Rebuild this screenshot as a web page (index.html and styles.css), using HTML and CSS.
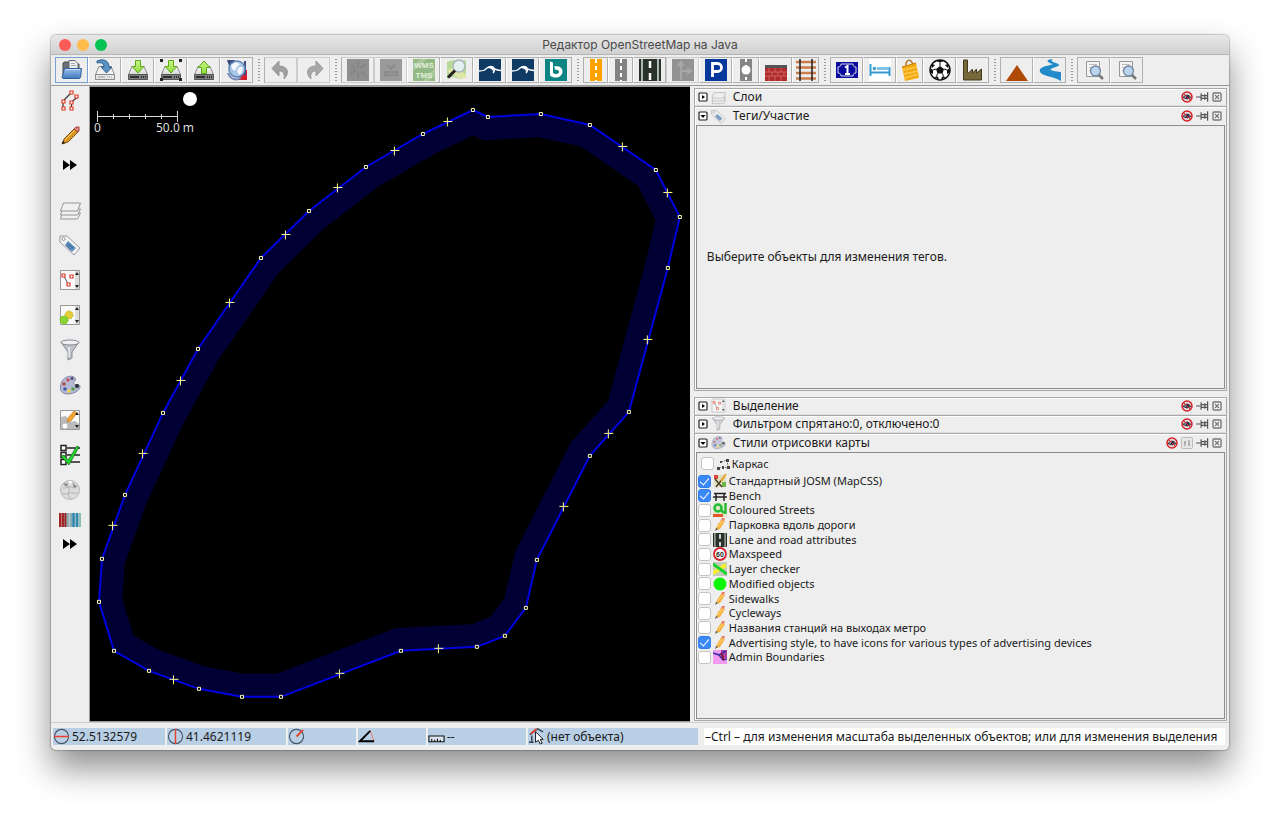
FILE: index.html
```html
<!DOCTYPE html>
<html lang="ru">
<head>
  <meta charset="UTF-8" />
  <meta name="viewport" content="width=device-width, initial-scale=1.0"/>
  <title>Редактор OpenStreetMap на Java</title>
  <link rel="stylesheet" href="styles.css">
</head>
<body>

  <svg class="sprite" aria-hidden="true">
    <defs>
      <linearGradient id="gGreen" x1="0" y1="0" x2="0" y2="1"><stop offset="0" stop-color="#c9f58a"/><stop offset="1" stop-color="#8fdc3c"/></linearGradient>
      <linearGradient id="gBlue" x1="0" y1="0" x2="0" y2="1"><stop offset="0" stop-color="#9cc0ea"/><stop offset="1" stop-color="#3f78bf"/></linearGradient>
      <linearGradient id="gDisk" x1="0" y1="0" x2="0" y2="1"><stop offset="0" stop-color="#fafafa"/><stop offset="1" stop-color="#c4c5c2"/></linearGradient>
    </defs>
    <symbol id="i-folder" viewBox="0 0 22 22">
      <path d="M2 18V4l1-1h5l1 2h9v12z" fill="#6b7078" stroke="#4a4f56"/>
      <path d="M8 1.500h6l3 3V12H8z" fill="#eee" stroke="#666"/><path d="M10 4.500h4M10 6.500h5" stroke="#aaa"/>
      <path d="M3.500 9.500h17l-1 9-1 1H2l-1-1z" fill="url(#gBlue)" stroke="#2d5f9f"/>
      <path d="M4 10.500h15" stroke="#c6dcf5"/>
    </symbol>
    <symbol id="i-disk" viewBox="0 0 22 22">
      <path d="M5 7.500h12l3.500 8v5h-19v-5z" fill="url(#gDisk)" stroke="#8a8a8a"/>
      <path d="M1.500 15.500h19v5h-19z" fill="#7d807e" stroke="#555"/>
      <path d="M3 18h9M14 18h1M16 18h1M18 18h1" stroke="#2e2e2e" stroke-width="2"/>
    </symbol>
    <symbol id="i-save" viewBox="0 0 22 22">
      <path d="M5 7.500h12l3.500 8v5h-19v-5z" fill="#f2f2f2" stroke="#8b8b8b"/><path d="M1.500 15.500h19v5h-19z" fill="#e6e7e9" stroke="#8b8b8b"/>
      <path d="M4 18h7M13 18h1M15 18h1M17 18h1" stroke="#999"/>
      <path d="M3 2c7-3 12 0 12 6h3l-5.500 6L7 8h3C10 5 8 3 3 4z" fill="#5a92c4" stroke="#2c5f8f"/>
    </symbol>
    <symbol id="i-down" viewBox="0 0 22 22">
      <use href="#i-disk"/><path d="M8.500 1.500h5v6h3.500l-6 6.500-6-6.500h3.500z" fill="url(#gGreen)" stroke="#5aa816"/>
    </symbol>
    <symbol id="i-downsel" viewBox="0 0 22 22">
      <use href="#i-down"/><path d="M0 0h3v3H0zM19 0h3v3h-3zM0 19h3v3H0zM19 19h3v3h-3z" fill="#222"/>
    </symbol>
    <symbol id="i-up" viewBox="0 0 22 22">
      <use href="#i-disk"/><path d="M8.500 14.500h5v-6H17l-6-6.500-6 6.500h3.500z" fill="url(#gGreen)" stroke="#5aa816"/>
    </symbol>
    <symbol id="i-globe" viewBox="0 0 22 22">
      <path d="M1 1h8L4 10z" fill="#3b4d7c"/><path d="M21 21h-9l6-10h3z" fill="#d81b2c"/>
      <path d="M19 2v14" stroke="#3b4d7c" stroke-width="2"/>
      <circle cx="11" cy="10" r="8" fill="#a8c6e8" stroke="#5d82b5" stroke-width="1.500"/>
      <path d="M5 6l5-3 4 2-3 3-2 4-3-2zM13 8l4 0-1 6-3 2-2-4z" fill="#f3f7fb"/>
      <path d="M2 14c2 6 8 8 13 5" fill="none" stroke="#6d86b5" stroke-width="2"/>
    </symbol>
    <symbol id="i-undo" viewBox="0 0 22 22">
      <path d="M9 2v5c9 0 11 7 5 13 1-6-1-8-5-8v5L2 9.500z" fill="#a0a0a0" stroke="#979797"/>
    </symbol>
    <symbol id="i-redo" viewBox="0 0 22 22">
      <path d="M13 2v5C4 7 2 14 8 20c-1-6 1-8 5-8v5l7-7.500z" fill="#a8a8a8" stroke="#999"/>
    </symbol>
    <symbol id="i-gray1" viewBox="0 0 22 22">
      <path d="M0 0h22v22H0z" fill="#8f8f8f"/><path d="M11 3v6M11 13v6M3 16l6-5M13 9l6-4M4 6l4 3M14 13l5 4" stroke="#858585" stroke-width="2"/>
    </symbol>
    <symbol id="i-gray2" viewBox="0 0 22 22">
      <path d="M0 0h22v22H0z" fill="#9a9a9a"/><path d="M8 6l3 4 4-5M5 13h12v3H5z" stroke="#8b8b8b" stroke-width="2" fill="none"/>
    </symbol>
    <symbol id="i-zoommap" viewBox="0 0 22 22">
      <path d="M1 3l6-2 8 1 5-1v17l-6 2-7-2-6 2z" fill="#b7d99a"/><path d="M1 12l8-5 11 9v3l-6 1z" fill="#e0e6a8"/>
      <circle cx="13" cy="7" r="6" fill="#e3eff0" stroke="#a9b6b8" stroke-width="1.500"/><path d="M9 11.500l-7 7" stroke="#222" stroke-width="3"/>
    </symbol>
    <symbol id="i-wave" viewBox="0 0 22 22">
      <path d="M0 0h22v22H0z" fill="#0f3a63"/><path d="M0 12c5 0 6-1 8-3s6-2 7 0 0 4-1 5M9 8.500c5-1 6 3 13 3" fill="none" stroke="#fff" stroke-width="1.300"/><path d="M8 9c3-2 6-1 7 1l-1 3c0-3-3-4-6-4z" fill="#fff"/>
    </symbol>
    <symbol id="i-bing" viewBox="0 0 22 22">
      <path d="M0 0h22v22H0z" fill="#0c8484"/><path d="M5 2.500l3 1v10.500c2 2 6 1 6-1s-2-2.500-3.500-2L9 7.500c5-1 8.500 1 8.500 5 0 6-8 8-12.500 4z" fill="#fff"/>
    </symbol>
    <symbol id="i-roado" viewBox="0 0 22 22"><path d="M5 0h12v22H5z" fill="#ffa200"/><path d="M11 0v22" stroke="#fff" stroke-width="2" stroke-dasharray="4 3"/></symbol>
    <symbol id="i-roadg" viewBox="0 0 22 22"><path d="M5 0h12v22H5z" fill="#838383"/><path d="M11 0v22" stroke="#fff" stroke-width="2" stroke-dasharray="4 3"/></symbol>
    <symbol id="i-highway" viewBox="0 0 22 22">
      <path d="M0 0h22v22H0z" fill="#27332a"/><path d="M3 0v22M19 0v22" stroke="#dfe3df" stroke-width="1.500"/><path d="M11 2v7M11 14v7" stroke="#fff" stroke-width="2.500"/>
    </symbol>
    <symbol id="i-turn" viewBox="0 0 22 22"><path d="M0 0h22v22H0z" fill="#929292"/><path d="M9 21V4M9 12h8M6 7l3-4 3 4M15 9l4 3-4 3" stroke="#a8a8a8" stroke-width="2" fill="none"/></symbol>
    <symbol id="i-parking" viewBox="0 0 22 22"><path d="M0 0h22v22H0z" fill="#06379b"/><path d="M7.500 18V4.500h5a4 4 0 0 1 0 8h-5" fill="none" stroke="#fff" stroke-width="2.800"/></symbol>
    <symbol id="i-node" viewBox="0 0 22 22"><path d="M5 0h12v22H5z" fill="#858585"/><path d="M11 0v22" stroke="#fff" stroke-width="2" stroke-dasharray="3 3"/><circle cx="11" cy="11" r="4.500" fill="#fff"/></symbol>
    <symbol id="i-wall" viewBox="0 0 22 22">
      <path d="M0 6h22v16H0z" fill="#b02c2c"/><path d="M0 6h22v3H0z" fill="#555"/><path d="M0 13h22M0 17h22M4 9v4M10 9v4M16 9v4M7 13v4M13 13v4M19 13v4M4 17v5M10 17v5M16 17v5" stroke="#df8585" stroke-width=".6"/>
    </symbol>
    <symbol id="i-rail" viewBox="0 0 22 22"><path d="M1 3h20M1 8.500h20M1 14h20M1 19.500h20" stroke="#c97c4c" stroke-width="2.500"/><path d="M5 0v22M17 0v22" stroke="#1c1c1c" stroke-width="1.500"/></symbol>
    <symbol id="i-one" viewBox="0 0 22 22">
      <path d="M0 3h22v16H0z" fill="#0b0b9d"/><path d="M5 5h12c0 2 1 3 3 3v6c-2 0-3 1-3 3H5c0-2-1-3-3-3V8c2 0 3-1 3-3z" fill="none" stroke="#dde"/><path d="M9 8.500l2.500-1.500v8M9 15h5" fill="none" stroke="#fff" stroke-width="2"/>
    </symbol>
    <symbol id="i-bed" viewBox="0 0 22 22"><path d="M0 0h22v22H0z" fill="#fff"/><path d="M1.500 5v12M2 13.500h18M20.500 8v9" stroke="#359bd0" stroke-width="2"/><circle cx="5.500" cy="9.500" r="1.700" fill="#359bd0"/><path d="M8 8h12v3H8z" fill="#7fc3e6"/></symbol>
    <symbol id="i-bag" viewBox="0 0 22 22"><path d="M7 8c-1-7 5-10 7-2" fill="none" stroke="#b2752c" stroke-width="1.500"/><path d="M3 8l14-4 3 15-14 3z" fill="#f4a913"/><path d="M4 11l14-3M5 15l14-3M5 19l15-4" stroke="#fac84d" stroke-width="1.500"/><path d="M3 8l14-4" stroke="#c98100" fill="none"/></symbol>
    <symbol id="i-ball" viewBox="0 0 22 22">
      <circle cx="11" cy="11" r="10" fill="#fff" stroke="#111" stroke-width="1.500"/><path d="M11 7l4 3-1.500 4.500h-5L7 10zM7 2l4 1.500L15 2l-2-1H9zM1 9l3 2v4l-2-1zM21 9l-3 2v4l2-1zM5 18l4-.5 1 3.500zM17 18l-4-.5-1 3.500zM3 5l3 1-3 3zM19 5l-3 1 3 3z" fill="#111"/><path d="M11 3.500V7M15 10l3 1M13.500 14.500l1 3M8.500 14.500l-1 3M7 10l-3 1" stroke="#111"/>
    </symbol>
    <symbol id="i-factory" viewBox="0 0 22 22"><path d="M1.500 1h4v12l1 1 4-4v4l4-4v4l5-4v11h-18z" fill="#77683c" stroke="#42391c"/></symbol>
    <symbol id="i-peak" viewBox="0 0 22 22"><path d="M11 6l11 16H0z" fill="#ae4a05"/></symbol>
    <symbol id="i-river" viewBox="0 0 22 22"><path d="M14 0C4 1 10 4 14 5 10 7-1 7 1 13c2 4 12 4 21 9v-9c-8-1-14-2-8-4 7-2 8-3 3-5-4-1-6-3-3-4z" fill="#238bc9"/></symbol>
    <symbol id="i-search" viewBox="0 0 22 22">
      <path d="M3.500 2.500h13v15h-13z" fill="#f4f4f2" stroke="#999"/><path d="M6 5.500h8M6 8.500h3M6 11.500h2" stroke="#bbb"/><circle cx="12.500" cy="12" r="5" fill="#b8d4ee" stroke="#7487a0" stroke-width="1.300"/><path d="M16 16l4 4" stroke="#777" stroke-width="2.500"/>
    </symbol>

    <symbol id="i-select" viewBox="0 0 22 22"><path d="M4 19v-8l8-8M12.500 19v-7l6-5" fill="none" stroke="#333" stroke-width="1.200"/><path d="M3 17h3v3H3zM3 10h3v3H3zM11 1h3v3h-3zM11 17h3v3h-3zM11 11h3v3h-3zM16 5h3v3h-3z" fill="#fff" stroke="#e03a28" stroke-width="1.200"/></symbol>
    <symbol id="i-draw" viewBox="0 0 22 22"><path d="M3 19l2-5L15 4l4 3-10 10z" fill="#dd9523" stroke="#80501a"/><path d="M15 4l2-2h3v4l-1 1z" fill="#e58a7e" stroke="#a64138"/><path d="M3 19l1-3 2 2z" fill="#111"/><path d="M6 15L16 5" stroke="#f6ca62"/></symbol>
    <symbol id="i-more" viewBox="0 0 16 10"><path d="M1 0l7 5-7 5zM8 0l7 5-7 5z" fill="#000"/></symbol>
    <symbol id="i-layers" viewBox="0 0 22 22"><g fill="#f0f0f0" stroke="#969696"><path d="M1.500 20l2-6h18l-3 6z"/><path d="M1.500 16l2-6h18l-3 6z"/><path d="M1.500 12l3-8h17l-3 8z"/></g></symbol>
    <symbol id="i-tag" viewBox="0 0 22 22"><path d="M1 2h7l13 12-6 7L1 8z" fill="#f3f3f3" stroke="#969ba3"/><circle cx="4.500" cy="5" r="1.500" fill="#fff" stroke="#999"/><path d="M9 7l8 7-4 4-7-7z" fill="#5e8ebd"/><path d="M9 10l5 4M7 11l5 5" stroke="#315e8d"/></symbol>
    <symbol id="i-selection" viewBox="0 0 22 22"><path d="M1.500 1.500h19v19h-19z" fill="#fafafa" stroke="#999"/><path d="M16 2h4v18h-4z" fill="#ddd"/><path d="M16 6l2-3 2 3zM16 16l2 3 2-3z" fill="#222"/><path d="M5 7l4 8M11 8h2" fill="none" stroke="#555"/><path d="M3 5h3v3H3zM8 14h3v3H8zM11 6h3v3h-3z" fill="#fff" stroke="#df3b2d" stroke-width="1.200"/></symbol>
    <symbol id="i-relation" viewBox="0 0 22 22"><path d="M1.500 1.500h19v19h-19z" fill="#fafafa" stroke="#999"/><path d="M16 2h4v18h-4z" fill="#ddd"/><path d="M16 6l2-3 2 3zM16 16l2 3 2-3z" fill="#222"/><circle cx="10" cy="11" r="4" fill="#e3ce36" stroke="#c9b23a" stroke-dasharray="2 1"/><circle cx="5" cy="16" r="4" fill="#8ad42f" stroke="#76bd26" stroke-dasharray="2 1"/></symbol>
    <symbol id="i-filter" viewBox="0 0 22 22"><path d="M2 3l7 10v8l4-2v-6l7-10z" fill="#c1c4cb" stroke="#858891"/><ellipse cx="11" cy="3.500" rx="9" ry="2.500" fill="#f0f0f2" stroke="#858891"/><path d="M10 8v10" stroke="#fff"/></symbol>
    <symbol id="i-palette" viewBox="0 0 22 22"><path d="M2 10C3 3 13 0 16 4c2 3-3 4-1 6s6-1 6 3c-1 5-8 7-13 7S0 16 2 10z" fill="#b4b9d4" stroke="#8488a6"/><circle cx="9" cy="6" r="1.700" fill="#d14b57"/><circle cx="13" cy="4.500" r="1.500" fill="#52407b"/><circle cx="5" cy="10" r="1.700" fill="#b5463e"/><circle cx="6" cy="15" r="1.800" fill="#3f5bb0"/><circle cx="10" cy="17" r="1.800" fill="#e7d84a"/><circle cx="14" cy="15" r="1.800" fill="#5c9f4a"/><circle cx="18" cy="12" r="2" fill="#282d37"/></symbol>
    <symbol id="i-changeset" viewBox="0 0 22 22"><path d="M1.500 1.500h19v19h-19z" fill="#fafafa" stroke="#999"/><path d="M2 8l5-1 4 6 5-1 4 3v5H2z" fill="#bbb"/><circle cx="6" cy="17" r="3" fill="#fff" stroke="#bbb"/><path d="M8 13l1-4 6-7 3 2-6 8z" fill="#f0a631" stroke="#b57521" stroke-width=".6"/><path d="M16 6l2-3 2 3zM16 16l2 3 2-3z" fill="#222"/></symbol>
    <symbol id="i-valid" viewBox="0 0 22 22"><path d="M2 1.500h5v5H2zM2 8.500h5v5H2zM2 15.500h5v5H2zM8 4h13M8 11h13M8 18h13" fill="#fff" stroke="#222" stroke-width="1.500"/><path d="M2 12l3-1 4 5L18 2l2 1L10 21z" fill="#25d52c" stroke="#116615" stroke-width=".7"/></symbol>
    <symbol id="i-wiki" viewBox="0 0 22 22"><circle cx="11" cy="11" r="9.500" fill="#dcdcdc" stroke="#b8b8b8"/><path d="M4 9c3 1 4-2 7-1M8 3c0 4 3 5 2 9s-1 5 2 8M11 8c4 1 5-2 8-1M10 14c3-1 5 1 9 0M3 15c3-1 4 1 7-1M14 3c-1 3 2 4 1 7" fill="none" stroke="#aaa" stroke-width=".8"/><path d="M4 4l5 1-2 3zM14 4l4 4-3 1z" fill="#888"/><path d="M9 2l4 0-1 3z" fill="#fff"/></symbol>
    <symbol id="i-stripes" viewBox="0 0 22 14"><path d="M0 0h22v14H0z" fill="#b9cccb"/><path d="M1 0v14M4 0v14" stroke="#a82428" stroke-width="2.500"/><path d="M6.500 0v14" stroke="#8e2226" stroke-width="2"/><path d="M9 0v14M12 0v14" stroke="#7ea3ac" stroke-width="1.500"/><path d="M14.500 0v14M18 0v14" stroke="#2d87ae" stroke-width="2.500"/><path d="M21 0v14" stroke="#5bb29b"/></symbol>

    <symbol id="i-eye" viewBox="0 0 12 12"><circle cx="6" cy="6" r="5" fill="#e9dde4" stroke="#d52028" stroke-width="1.500"/><path d="M2 6.500q4-5 8 0-4 3-8 0z" fill="#8c8fb8" stroke="#333"/><circle cx="6.500" cy="6" r="1.500" fill="#223"/><path d="M2.500 2.500l7 7" stroke="#d52028"/></symbol>
    <symbol id="i-pin" viewBox="0 0 14 10"><path d="M0 5h5M5.500 1v8M12.500 0v10M6 3.500h6M6 6.500h6M9.500 2v6" fill="none" stroke="#555" stroke-width="1.300"/></symbol>
    <symbol id="i-close" viewBox="0 0 10 10"><rect x="1" y="1" width="8" height="8" rx="1" fill="#f5f5f5" stroke="#777" stroke-width="1.400"/><path d="M3 3l4 4M7 3l-4 4" stroke="#777" stroke-width="1.200"/></symbol>
    <symbol id="i-prefs" viewBox="0 0 12 12"><rect x=".5" y=".5" width="11" height="11" rx="1" fill="#e7e7e7" stroke="#bbb"/><path d="M4 5v4M8 3v5M3 5h2M7 8h2" stroke="#888"/></symbol>
    <symbol id="i-plus" viewBox="0 0 10 10"><rect x="1" y="1" width="8" height="8" rx="1" fill="#fff" stroke="#222" stroke-width="1.200"/><path d="M4 3l3 2-3 2z" fill="#000"/></symbol>
    <symbol id="i-minus" viewBox="0 0 10 10"><rect x="1" y="1" width="8" height="8" rx="1" fill="#fff" stroke="#222" stroke-width="1.200"/><path d="M2.500 4h5L5 7z" fill="#000"/></symbol>

    <symbol id="s-wire" viewBox="0 0 14 14"><path d="M3 11l4-1 5 1M5 5l6-2 1 7" fill="none" stroke="#777" stroke-dasharray="2 1"/><path d="M1 10h3v3H1zM6 9h2v3H6zM11 9h3v3h-3zM10 2h3v3h-3zM4 4h2v2H4z" fill="#444"/></symbol>
    <symbol id="s-josm" viewBox="0 0 14 14"><path d="M1 1h12v12H1z" fill="#dfe0bd"/><path d="M1 1h4v4H1z" fill="#d8473c"/><path d="M9 8h4v5H9z" fill="#6bb54b"/><path d="M2 5l7 8M11 3L3 13" stroke="#514127" stroke-width="1.500"/><path d="M13 0L8 7" stroke="#f0a533" stroke-width="2"/></symbol>
    <symbol id="s-bench" viewBox="0 0 14 14"><path d="M1 4.500h12M0 8h14M3 4v8M11 4v8" stroke="#222" stroke-width="1.500"/></symbol>
    <symbol id="s-colour" viewBox="0 0 14 14"><path d="M0 0h14v14H0z" fill="#dfe9c5"/><circle cx="5" cy="5" r="3.500" fill="none" stroke="#20bd36" stroke-width="2.500"/><path d="M12.500 0v11M8 7l3 3" stroke="#2cba36" stroke-width="2.500"/><path d="M0 12.500h10" stroke="#e4562c" stroke-width="3"/></symbol>
    <symbol id="s-pencil" viewBox="0 0 14 14"><path d="M3 12l1-4 4-6 4 1-5 8z" fill="#f6b03d"/><path d="M8 2l1-2h3l-1 3z" fill="#e77f6f"/><path d="M5 9l5-6" stroke="#ffdc78"/><path d="M2 13l1-3 2 1z" fill="#555"/></symbol>
    <symbol id="s-check" viewBox="0 0 14 14"><path d="M0 0h14v14H0z" fill="#c3cbb9"/><path d="M0 11L13 3" stroke="#f6ef2f" stroke-width="4"/><path d="M0 2l14 10" stroke="#18d32d" stroke-width="3"/></symbol>
    <symbol id="s-mod" viewBox="0 0 14 14"><circle cx="7" cy="7" r="6.500" fill="#0bf50b"/></symbol>
    <symbol id="s-admin" viewBox="0 0 14 14"><path d="M0 0h14v14H0z" fill="#f09af0"/><path d="M8 0h6v9L8 6z" fill="#b13d9e"/><path d="M0 3l6 2 4 5 4-1M6 5l7-4" fill="none" stroke="#372cae" stroke-width="1.500"/><path d="M8 3l3 7" stroke="#8d153d" stroke-width="2"/></symbol>
  </svg>

  <div class="window">
    <header class="titlebar">
      <div class="lights">
        <button class="light red" aria-label="Закрыть"></button>
        <button class="light yellow" aria-label="Свернуть"></button>
        <button class="light green" aria-label="Развернуть"></button>
      </div>
      <h1>Редактор OpenStreetMap на Java</h1>
    </header>

    <nav class="toolbar">
      <button class="tool active" aria-label="Открыть"><svg><use href="#i-folder"/></svg></button>
      <button class="tool" aria-label="Сохранить"><svg><use href="#i-save"/></svg></button>
      <button class="tool" aria-label="Загрузить"><svg><use href="#i-down"/></svg></button>
      <button class="tool" aria-label="Загрузить область"><svg><use href="#i-downsel"/></svg></button>
      <button class="tool" aria-label="Отправить"><svg><use href="#i-up"/></svg></button>
      <button class="tool" aria-label="Обновить"><svg><use href="#i-globe"/></svg></button>
      <span class="sep"></span>
      <button class="tool" aria-label="Отменить" disabled><svg><use href="#i-undo"/></svg></button>
      <button class="tool" aria-label="Повторить" disabled><svg><use href="#i-redo"/></svg></button>
      <span class="sep"></span>
      <button class="tool" aria-label="Разбить" disabled><svg><use href="#i-gray1"/></svg></button>
      <button class="tool" aria-label="Объединить" disabled><svg><use href="#i-gray2"/></svg></button>
      <button class="tool" aria-label="WMS TMS"><svg viewBox="0 0 22 22"><path d="M0 0h22v22H0z" fill="#93b985"/><path d="M0 6l8-6h6L0 12zM10 22l12-13v7l-6 6z" fill="#a9c99a"/><text x="11" y="9" class="tile-text">WMS</text><text x="11" y="19" class="tile-text">TMS</text></svg></button>
      <button class="tool" aria-label="Слой карты"><svg><use href="#i-zoommap"/></svg></button>
      <button class="tool" aria-label="Снимки 1"><svg><use href="#i-wave"/></svg></button>
      <button class="tool" aria-label="Снимки 2"><svg><use href="#i-wave"/></svg></button>
      <button class="tool" aria-label="Bing"><svg><use href="#i-bing"/></svg></button>
      <span class="sep"></span>
      <button class="tool narrow" aria-label="Дорога"><svg><use href="#i-roado"/></svg></button>
      <button class="tool narrow" aria-label="Улица"><svg><use href="#i-roadg"/></svg></button>
      <button class="tool" aria-label="Полосы"><svg><use href="#i-highway"/></svg></button>
      <button class="tool" aria-label="Поворот" disabled><svg><use href="#i-turn"/></svg></button>
      <button class="tool" aria-label="Парковка"><svg><use href="#i-parking"/></svg></button>
      <button class="tool mid" aria-label="Узел"><svg><use href="#i-node"/></svg></button>
      <button class="tool" aria-label="Стена"><svg><use href="#i-wall"/></svg></button>
      <button class="tool mid" aria-label="Железная дорога"><svg><use href="#i-rail"/></svg></button>
      <span class="sep"></span>
      <button class="tool" aria-label="Адрес"><svg><use href="#i-one"/></svg></button>
      <button class="tool" aria-label="Гостиница"><svg><use href="#i-bed"/></svg></button>
      <button class="tool mid" aria-label="Магазин"><svg><use href="#i-bag"/></svg></button>
      <button class="tool" aria-label="Спорт"><svg><use href="#i-ball"/></svg></button>
      <button class="tool" aria-label="Завод"><svg><use href="#i-factory"/></svg></button>
      <span class="sep"></span>
      <button class="tool" aria-label="Вершина"><svg><use href="#i-peak"/></svg></button>
      <button class="tool" aria-label="Река"><svg><use href="#i-river"/></svg></button>
      <span class="sep"></span>
      <button class="tool" aria-label="Поиск"><svg><use href="#i-search"/></svg></button>
      <button class="tool" aria-label="Поиск шаблонов"><svg><use href="#i-search"/></svg></button>
    </nav>

    <main class="workspace">
      <aside class="modes">
        <div class="mode-group">
          <button aria-label="Выделить"><svg><use href="#i-select"/></svg></button>
          <button aria-label="Рисовать"><svg><use href="#i-draw"/></svg></button>
          <button class="more" aria-label="Ещё режимы"><svg><use href="#i-more"/></svg></button>
        </div>
        <div class="mode-group">
          <button aria-label="Слои"><svg><use href="#i-layers"/></svg></button>
          <button aria-label="Теги"><svg><use href="#i-tag"/></svg></button>
          <button aria-label="Выделение"><svg><use href="#i-selection"/></svg></button>
          <button aria-label="Отношения"><svg><use href="#i-relation"/></svg></button>
          <button aria-label="Фильтр"><svg><use href="#i-filter"/></svg></button>
          <button aria-label="Стили"><svg><use href="#i-palette"/></svg></button>
          <button aria-label="Пакеты правок"><svg><use href="#i-changeset"/></svg></button>
          <button aria-label="Проверка"><svg><use href="#i-valid"/></svg></button>
          <button aria-label="Википедия"><svg><use href="#i-wiki"/></svg></button>
          <button class="strip" aria-label="Цвета"><svg><use href="#i-stripes"/></svg></button>
          <button class="more" aria-label="Ещё панели"><svg><use href="#i-more"/></svg></button>
        </div>
      </aside>

      <section class="map">
        <svg viewBox="90 87 600 634" preserveAspectRatio="xMinYMin meet">
          <defs>
            <path id="way" d="M473 110L488 117L541 114L590 125L656 170L680 217L668 268L629 412L590 456L537 560L526 608L505 636L477 647L401 651L281 697L242 697L199 689L149 671L114 651L99 602L102 559L125 495L163 413L198 349L261 258L309 211L366 167L423 134z"/>
            <clipPath id="inside"><use href="#way"/></clipPath>
            <path id="x" d="M-4 0h9M0-4v9" stroke="#ff8" fill="none"/>
            <path id="n" d="M-1-1h3v3h-3z" stroke="#ffb" fill="#000"/>
          </defs>
          <use href="#way" class="band" clip-path="url(#inside)"/>
          <use href="#way" class="line"/>
          <g class="nodes" id="nodes"></g>
          <circle cx="190" cy="99" r="7" fill="#fff"/>
          <path d="M97.500 111v11M97.500 116.500h80M177.500 111v11M113.500 114v5M129.500 114v5M145.500 114v5M161.500 114v5" stroke="#ddd" fill="none"/>
          <text x="94" y="132" class="scale-text">0</text>
          <text x="156" y="132" class="scale-text">50.0 m</text>
        </svg>
      </section>

      <div class="dialogs">
        <div class="stack top">
          <section class="panel">
            <header><button aria-label="Развернуть"><svg class="fold"><use href="#i-plus"/></svg></button><svg class="badge"><use href="#i-layers"/></svg><h2>Слои</h2>
              <span class="controls"><button aria-label="Скрыть"><svg class="eye"><use href="#i-eye"/></svg></button><button aria-label="Закрепить"><svg class="pin"><use href="#i-pin"/></svg></button><button aria-label="Закрыть"><svg class="close"><use href="#i-close"/></svg></button></span></header>
          </section>
          <section class="panel open">
            <header><button aria-label="Свернуть"><svg class="fold"><use href="#i-minus"/></svg></button><svg class="badge"><use href="#i-tag"/></svg><h2>Теги/Участие</h2>
              <span class="controls"><button aria-label="Скрыть"><svg class="eye"><use href="#i-eye"/></svg></button><button aria-label="Закрепить"><svg class="pin"><use href="#i-pin"/></svg></button><button aria-label="Закрыть"><svg class="close"><use href="#i-close"/></svg></button></span></header>
            <div class="content hint"><p>Выберите объекты для изменения тегов.</p></div>
          </section>
        </div>

        <div class="stack bottom">
          <section class="panel">
            <header><button aria-label="Развернуть"><svg class="fold"><use href="#i-plus"/></svg></button><svg class="badge"><use href="#i-selection"/></svg><h2>Выделение</h2>
              <span class="controls"><button aria-label="Скрыть"><svg class="eye"><use href="#i-eye"/></svg></button><button aria-label="Закрепить"><svg class="pin"><use href="#i-pin"/></svg></button><button aria-label="Закрыть"><svg class="close"><use href="#i-close"/></svg></button></span></header>
          </section>
          <section class="panel">
            <header><button aria-label="Развернуть"><svg class="fold"><use href="#i-plus"/></svg></button><svg class="badge"><use href="#i-filter"/></svg><h2>Фильтром спрятано:0, отключено:0</h2>
              <span class="controls"><button aria-label="Скрыть"><svg class="eye"><use href="#i-eye"/></svg></button><button aria-label="Закрепить"><svg class="pin"><use href="#i-pin"/></svg></button><button aria-label="Закрыть"><svg class="close"><use href="#i-close"/></svg></button></span></header>
          </section>
          <section class="panel open">
            <header><button aria-label="Свернуть"><svg class="fold"><use href="#i-minus"/></svg></button><svg class="badge"><use href="#i-palette"/></svg><h2>Стили отрисовки карты</h2>
              <span class="controls"><button aria-label="Скрыть"><svg class="eye"><use href="#i-eye"/></svg></button><button aria-label="Настройки"><svg class="eye"><use href="#i-prefs"/></svg></button><button aria-label="Закрепить"><svg class="pin"><use href="#i-pin"/></svg></button><button aria-label="Закрыть"><svg class="close"><use href="#i-close"/></svg></button></span></header>
            <div class="content">
              <label class="style-row wireframe"><input type="checkbox"><svg><use href="#s-wire"/></svg>Каркас</label>
              <div class="styles">
                <label class="style-row"><input type="checkbox" checked><svg><use href="#s-josm"/></svg>Стандартный JOSM (MapCSS)</label>
                <label class="style-row"><input type="checkbox" checked><svg><use href="#s-bench"/></svg>Bench</label>
                <label class="style-row"><input type="checkbox"><svg><use href="#s-colour"/></svg>Coloured Streets</label>
                <label class="style-row"><input type="checkbox"><svg><use href="#s-pencil"/></svg>Парковка вдоль дороги</label>
                <label class="style-row"><input type="checkbox"><svg><use href="#i-highway"/></svg>Lane and road attributes</label>
                <label class="style-row"><input type="checkbox"><svg viewBox="0 0 14 14"><circle cx="7" cy="7" r="6" fill="#fff" stroke="#d3222c" stroke-width="1.800"/><text x="7" y="9.500" class="speed-text">60</text></svg>Maxspeed</label>
                <label class="style-row"><input type="checkbox"><svg><use href="#s-check"/></svg>Layer checker</label>
                <label class="style-row"><input type="checkbox"><svg><use href="#s-mod"/></svg>Modified objects</label>
                <label class="style-row"><input type="checkbox"><svg><use href="#s-pencil"/></svg>Sidewalks</label>
                <label class="style-row"><input type="checkbox"><svg><use href="#s-pencil"/></svg>Cycleways</label>
                <label class="style-row"><input type="checkbox"><svg><use href="#s-pencil"/></svg>Названия станций на выходах метро</label>
                <label class="style-row"><input type="checkbox" checked><svg><use href="#s-pencil"/></svg>Advertising style, to have icons for various types of advertising devices</label>
                <label class="style-row"><input type="checkbox"><svg><use href="#s-admin"/></svg>Admin Boundaries</label>
              </div>
            </div>
          </section>
        </div>
      </div>
    </main>

    <footer class="status">
      <div class="cell lat"><svg viewBox="0 0 18 18"><circle cx="9" cy="9" r="7.500" fill="none" stroke="#456" stroke-width="1.200"/><path d="M1 9h16" stroke="#e8402c" stroke-width="1.500"/></svg>52.5132579</div>
      <div class="cell lon"><svg viewBox="0 0 18 18"><circle cx="9" cy="9" r="7.500" fill="none" stroke="#456" stroke-width="1.200"/><path d="M9 1v16" stroke="#e8402c" stroke-width="1.500"/></svg>41.4621119</div>
      <div class="cell angle"><svg viewBox="0 0 18 18"><circle cx="9" cy="9" r="7.500" fill="none" stroke="#456" stroke-width="1.200"/><path d="M9 9l7-7" stroke="#e8402c" stroke-width="2"/></svg></div>
      <div class="cell angle"><svg viewBox="0 0 18 18"><path d="M13 3l4 11" stroke="#e88" stroke-width="1.200"/><path d="M13 3L2 14h15" fill="none" stroke="#000" stroke-width="2"/></svg></div>
      <div class="cell dist"><svg viewBox="0 0 18 18"><path d="M1 8.500h16v6H1zM4 14.500v-3M7 14.500v-2M10 14.500v-3M13 14.500v-2" fill="#dbe6f1" stroke="#111" stroke-width="1.200"/></svg>--</div>
      <div class="cell object"><svg viewBox="0 0 18 18"><path d="M2 7l8-6 6 3M4 8v8M1 15h5" fill="none" stroke="#345" stroke-width="1.500"/><path d="M3 6l6-5" stroke="#e8402c" stroke-width="2"/><path d="M8 4v11l3-2 2 4 2-1-2-4h3z" fill="#fff" stroke="#111"/></svg>(нет объекта)</div>
      <div class="help">–Ctrl – для изменения масштаба выделенных объектов; или для изменения выделения</div>
    </footer>
  </div>

  <script src="map.js"></script>
</body>
</html>
```
FILE: styles.css
```css
* {
  box-sizing: border-box;
}

body {
  margin: 0;
  height: 100vh;
  padding: 35px 51px 67px;
  background: #fff;
  color: #1a1a1a;
  font-family: "Noto Sans", sans-serif;
  font-size: 12px;
  overflow: hidden;
}

button {
  padding: 0;
  border: 0;
  background: none;
}

svg {
  display: block;
}

h1, h2, p {
  margin: 0;
  font-weight: normal;
}

.sprite {
  position: absolute;
  width: 0;
  height: 0;
}

.window {
  display: flex;
  flex-direction: column;
  height: 100%;
  background: #eee;
  border-radius: 5px;
  overflow: hidden;
  box-shadow: 0 0 1px 1px rgba(0,0,0,0.2), 0 18px 34px rgba(0,0,0,0.45);
}

/* title bar */
.titlebar {
  display: grid;
  grid-template-columns: 1fr auto 1fr;
  align-items: center;
  height: 20px;
  flex: none;
  background: linear-gradient(#e8e8e8, #d0d0d0);
  border-bottom: 1px solid #b4b4b4;
}

.titlebar h1 {
  font-family: Inter, sans-serif;
  font-size: 12px;
  line-height: 18px;
  color: #4a4a4a;
}

.lights {
  display: flex;
  gap: 6px;
  padding-left: 8px;
}

.light {
  width: 12px;
  height: 12px;
  border-radius: 50%;
}

.red { background: #fc5b57; }
.yellow { background: #fdbc4b; }
.green { background: #06c454; }

/* toolbar */
.toolbar {
  display: flex;
  align-items: center;
  height: 31px;
  flex: none;
  padding-left: 4px;
  border-bottom: 1px solid #999;
}

.tool {
  display: flex;
  align-items: center;
  justify-content: center;
  width: 33px;
  height: 26px;
  border: 1px solid #b0b0b0;
  border-left-color: #fff;
  background: #eee;
}

.tool svg {
  width: 22px;
  height: 22px;
}

.tool:disabled {
  border-color: #cdcdcd;
}

.sep + .tool {
  border-left-color: #b0b0b0;
}

.tool.active {
  border-color: #7a9fd0;
}

.tool.narrow { width: 25px; }
.tool.mid { width: 27px; }

.sep {
  width: 11px;
  height: 22px;
  background: repeating-linear-gradient(#999 0 1px, transparent 1px 3px) center / 2px 100% no-repeat;
}

.tile-text {
  font: bold 8px "Liberation Sans", sans-serif;
  text-anchor: middle;
  fill: #e3eedb;
}

/* workspace */
.workspace {
  display: flex;
  flex: 1;
  min-height: 0;
}

.modes {
  display: flex;
  flex-direction: column;
  gap: 27px;
  width: 38px;
  flex: none;
  padding-top: 3px;
}

.mode-group {
  display: flex;
  flex-direction: column;
  align-items: center;
  gap: 11px;
}

.mode-group button {
  height: 24px;
  display: flex;
  align-items: center;
}

.mode-group svg {
  width: 22px;
  height: 22px;
}

.mode-group .more { height: 12px; }
.mode-group .more svg { width: 16px; height: 10px; }
.mode-group .strip { height: 14px; }
.mode-group .strip svg { height: 14px; }

.map {
  flex: 603;
  min-width: 0;
  background: #000;
  border: 1px solid #999;
  border-width: 1px 0 1px 1px;
  overflow: hidden;
}

.map svg {
  width: 100%;
  height: 100%;
}

.band {
  fill: none;
  stroke: #000035;
  stroke-width: 46;
}

.line {
  fill: none;
  stroke: #0000e0;
  stroke-width: 2;
}

.scale-text {
  font: 12px "Noto Sans", sans-serif;
  fill: #ddd;
}

/* dialogs */
.dialogs {
  display: flex;
  flex-direction: column;
  gap: 6px;
  flex: 536;
  min-width: 0;
  padding: 2px 2px 1px 4px;
}

.stack {
  display: flex;
  flex-direction: column;
  min-height: 0;
}

.stack.top { flex: 14; }
.stack.bottom { flex: 15; }

.panel {
  border: 1px solid #a8a8a8;
  border-bottom-color: #ddd;
  box-shadow: inset 1px 1px #fff;
}

.panel.open {
  display: flex;
  flex-direction: column;
  flex: 1;
  min-height: 0;
  border-bottom-color: #a8a8a8;
}

.panel header {
  display: flex;
  align-items: center;
  height: 16px;
  flex: none;
  padding: 0 4px 0 3px;
}

.panel.open header {
  height: 18px;
}

.panel h2 {
  flex: 1;
  font-size: 12px;
  line-height: 16px;
}

.fold {
  width: 10px;
  height: 10px;
}

.badge {
  width: 15px;
  height: 15px;
  margin: 0 7px 0 3px;
  opacity: 0.7;
}

.controls {
  display: flex;
  align-items: center;
  gap: 3px;
}

.eye { width: 12px; height: 12px; }
.pin { width: 13px; height: 10px; }
.close { width: 10px; height: 10px; }

.content {
  flex: 1;
  min-height: 0;
  margin: 0 1px 1px;
  border: 1px solid #8c8c8c;
}

.hint {
  display: flex;
  align-items: center;
  padding-left: 10px;
}

.style-row {
  display: flex;
  align-items: center;
  gap: 2px;
  font-size: 11px;
  line-height: 14px;
}

.style-row svg {
  width: 14px;
  height: 14px;
}

.wireframe {
  padding: 4px 0 2px 4px;
}

.styles {
  display: grid;
  grid-auto-rows: 1fr;
  height: 192px;
  padding: 1px 0 0 1px;
}

.style-row input {
  appearance: none;
  display: flex;
  justify-content: center;
  width: 13px;
  height: 13px;
  margin: 0;
  border: 1px solid #c4c4c4;
  border-radius: 3px;
  background: #fff;
}

.style-row input:checked {
  border-color: #2f7ff0;
  background: #3b88f7;
}

.style-row input:checked::after {
  content: "";
  width: 4px;
  height: 8px;
  border: solid #fff;
  border-width: 0 1px 1px 0;
  transform: rotate(40deg);
}

.speed-text {
  font: bold 7px "Liberation Sans", sans-serif;
  text-anchor: middle;
  fill: #222;
}

/* status bar */
.status {
  display: flex;
  gap: 2px;
  flex: none;
  height: 28px;
  padding: 5px 4px 5px 2px;
  border-top: 1px solid #ccc;
}

.cell {
  display: flex;
  align-items: center;
  gap: 2px;
  background: #b8cfe5;
  line-height: 17px;
  white-space: nowrap;
}

.cell svg {
  width: 17px;
  height: 17px;
}

.lat { width: 112px; }
.lon { width: 119px; }
.angle { width: 68px; }
.dist { width: 98px; }
.object { width: 170px; }

.help {
  flex: 1;
  min-width: 0;
  margin-left: 4px;
  padding-left: 1px;
  background: #fff;
  line-height: 17px;
  white-space: nowrap;
  overflow: hidden;
}
```
FILE: map.js
```js
const nodes = [
  [473,110],[488,117],[541,114],[590,125],[656,170],[680,217],[668,268],[629,412],[590,456],[537,560],
  [526,608],[505,636],[477,647],[401,651],[281,697],[242,697],[199,689],[149,671],[114,651],[99,602],
  [102,559],[125,495],[163,413],[198,349],[261,258],[309,211],[366,167],[423,134]
];
const middles = [
  [448,122],[623,147],[668,193],[648,340],[609,434],[564,507],[439,649],[340,674],[174,680],[113,526],
  [143,454],[181,381],[230,303],[286,235],[338,188],[395,151]
];

function place(points, id) {
  return points.map(([x, y]) => `<use href="#${id}" x="${x - 0.5}" y="${y - 0.5}"/>`).join("");
}

document.getElementById("nodes").innerHTML = place(nodes, "n") + place(middles, "x");
```
